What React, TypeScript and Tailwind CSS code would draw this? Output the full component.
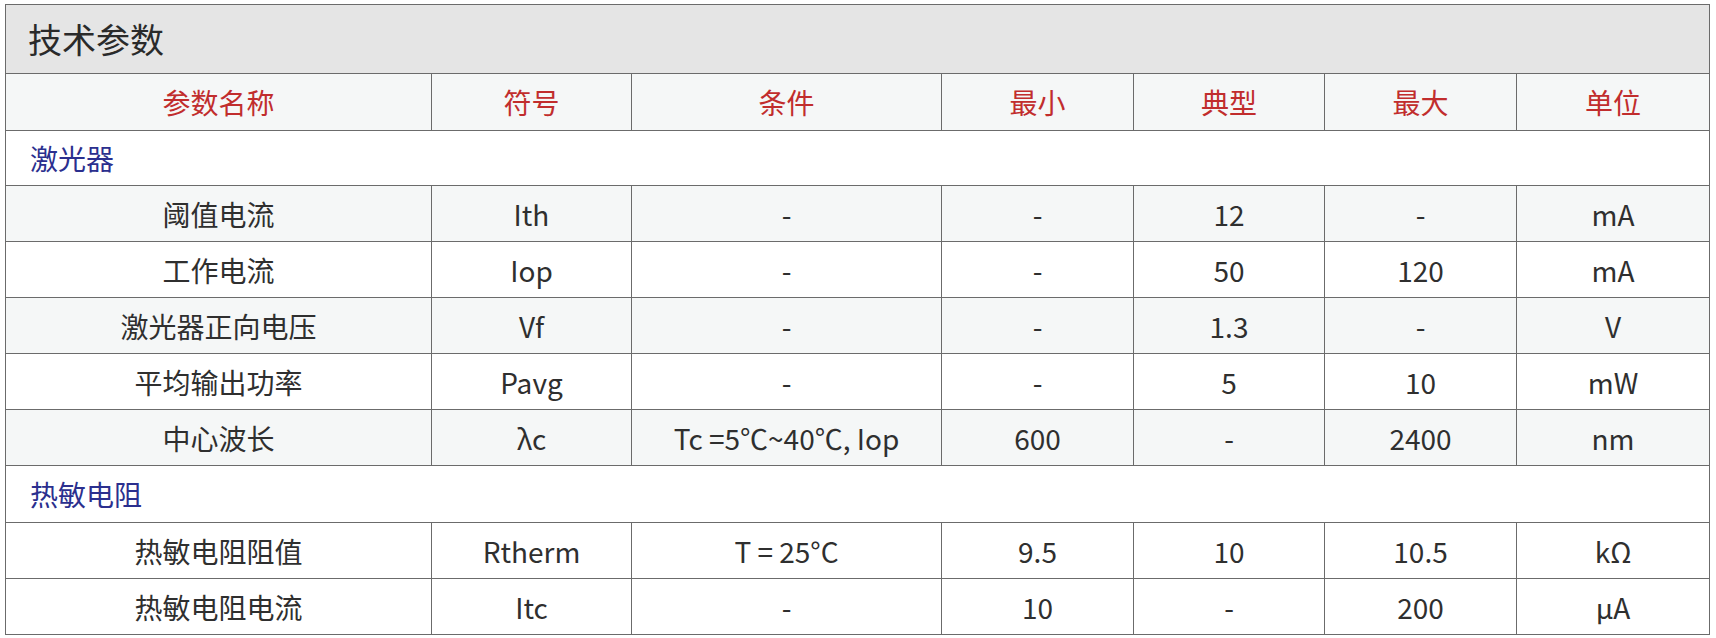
import React from "react";

type Row = { kind: "section"; label: string } | { kind: "data"; cells: string[] };

const rows: Row[] = [
  { kind: "section", label: "激光器" },
  { kind: "data", cells: ["阈值电流", "Ith", "-", "-", "12", "-", "mA"] },
  { kind: "data", cells: ["工作电流", "Iop", "-", "-", "50", "120", "mA"] },
  { kind: "data", cells: ["激光器正向电压", "Vf", "-", "-", "1.3", "-", "V"] },
  { kind: "data", cells: ["平均输出功率", "Pavg", "-", "-", "5", "10", "mW"] },
  { kind: "data", cells: ["中心波长", "λc", "Tc =5℃~40℃, Iop", "600", "-", "2400", "nm"] },
  { kind: "section", label: "热敏电阻" },
  { kind: "data", cells: ["热敏电阻阻值", "Rtherm", "T = 25°C", "9.5", "10", "10.5", "kΩ"] },
  { kind: "data", cells: ["热敏电阻电流", "Itc", "-", "10", "-", "200", "μA"] },
];

const heights = [55, 56, 56, 56, 56, 56, 57, 56, 56];
const headers = ["参数名称", "符号", "条件", "最小", "典型", "最大", "单位"];
const widths = [426, 200, 310, 192, 191, 192, 193];

export default function App() {
  let dataIndex = 0;
  return (
    <div
      className="bg-white pl-[5px] pt-[4px] w-[1716px] h-[638px]"
      style={{ fontFamily: '"Noto Sans CJK SC", "Noto Sans", sans-serif' }}
    >
      <table className="table-fixed border-collapse w-[1705px] text-[28px] text-[#2f2f2f]">
        <colgroup>
          {widths.map((w, i) => (
            <col key={i} style={{ width: w }} />
          ))}
        </colgroup>
        <tbody>
          <tr className="h-[69px] bg-[#e5e5e5]">
            <td colSpan={7} className="border border-[#6b6b6b] pl-[22px] text-[34px] text-[#2a2a2a] leading-none">
              技术参数
            </td>
          </tr>
          <tr className="h-[57px] bg-[#f5f7f7]">
            {headers.map((h) => (
              <td key={h} className="border border-[#6b6b6b] text-center text-[#c12d2d] leading-none">
                {h}
              </td>
            ))}
          </tr>
          {rows.map((r, i) => {
            if (r.kind === "section") {
              return (
                <tr key={i} className="bg-white" style={{ height: heights[i] }}>
                  <td colSpan={7} className="border border-[#6b6b6b] pl-[24px] text-[#2b2f8e] leading-none">
                    {r.label}
                  </td>
                </tr>
              );
            }
            const striped = dataIndex % 2 === 0;
            dataIndex += 1;
            if (i === 7) dataIndex = 1;
            return (
              <tr key={i} className={striped ? "bg-[#f5f7f7]" : "bg-white"} style={{ height: heights[i] }}>
                {r.cells.map((c, j) => (
                  <td key={j} className="border border-[#6b6b6b] text-center leading-none">
                    {c}
                  </td>
                ))}
              </tr>
            );
          })}
        </tbody>
      </table>
    </div>
  );
}
